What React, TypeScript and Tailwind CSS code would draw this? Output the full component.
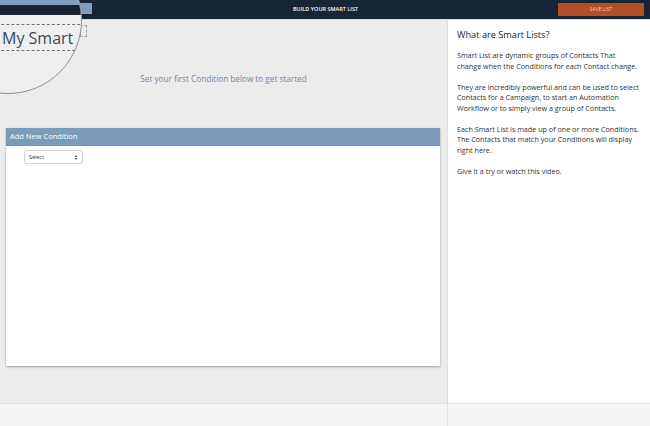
import React from "react";

const font = { fontFamily: '"Open Sans", "Liberation Sans", sans-serif' };

export default function App() {
  return (
    <div
      className="relative w-[650px] h-[426px] overflow-hidden flex flex-col bg-[#ececec]"
      style={font}
    >
      {/* Header */}
      <div className="relative h-[20px] shrink-0 bg-[#172537] border-b border-[#d6d9dd] flex items-center">
        <div className="absolute left-0 top-[3px] w-[92px] h-[11px] bg-[#7f9fbf]" />
        <div className="flex-1 flex justify-center">
          <span className="text-[5.5px] font-semibold text-white ml-[1px]">
            BUILD YOUR SMART LIST
          </span>
        </div>
        <div className="absolute left-[558px] top-[3px] w-[86px] h-[13px] bg-[#b24f27] flex items-center justify-center">
          <span className="text-[5px] text-[#e9c9b8]">SAVE LIST</span>
        </div>
      </div>

      {/* Main */}
      <div className="flex flex-1 min-h-0">
        <div className="w-[447px] shrink-0 bg-[#ececec] flex flex-col">
          <div className="h-[108px] flex items-start justify-center pt-[53px]">
            <span className="text-[8.2px] text-[#6e89a6] leading-[12px]">
              Set your first Condition below to get started
            </span>
          </div>
          <div className="ml-[6px] w-[434px] h-[238px] bg-white flex flex-col shadow-[0_1px_2px_rgba(0,0,0,0.35)]">
            <div className="h-[18px] bg-[#7a9bb9] flex items-center px-[4px] border-b border-dotted border-[#6a89a6]">
              <span className="text-[7.5px] text-white">Add New Condition</span>
            </div>
            <div className="pl-[18px] pt-[4px]">
              <div className="w-[59px] h-[14px] border border-[#cfd3d8] rounded-[3px] flex items-center justify-between px-[4px] bg-white">
                <span className="text-[5.5px] text-[#333]">Select</span>
                <svg width="4" height="7" viewBox="0 0 4 7">
                  <path d="M0.5 3 L2 1 L3.5 3 Z" fill="#555" />
                  <path d="M0.5 4 L2 6 L3.5 4 Z" fill="#555" />
                </svg>
              </div>
            </div>
          </div>
        </div>
        <div className="flex-1 bg-white border-l border-[#dedede] pl-[9px] pr-[4px] pt-[8px] text-[#2b2b2b]">
          <div className="text-[9.2px] leading-[13px] text-[#222] mb-[9px]">What are Smart Lists?</div>
          <div className="text-[7.2px] leading-[10.5px] flex flex-col gap-[10.5px] text-[#333] whitespace-nowrap">
            <p>Smart List are dynamic groups of Contacts That<br />change when the Conditions for each Contact change.</p>
            <p>They are incredibly powerful and can be used to select<br />Contacts for a Campaign, to start an Automation<br />Workflow or to simply view a group of Contacts.</p>
            <p>Each Smart List is made up of one or more Conditions.<br />The Contacts that match your Conditions will display<br />right here.</p>
            <p>Give it a try or watch this video.</p>
          </div>
        </div>
      </div>

      {/* Footer */}
      <div className="h-[23px] shrink-0 flex bg-[#f5f5f5] border-t border-[#e2e2e2]">
        <div className="w-[447px]" />
        <div className="flex-1 border-l border-[#e2e2e2]" />
      </div>

      {/* small dashed box outside magnifier */}
      <div className="absolute left-[80px] top-[25px] w-[7px] h-[12px] border border-dashed border-[#9aa1aa]" />

      {/* Magnifier */}
      <div className="absolute left-[-66px] top-[-54px] w-[148px] h-[148px] rounded-full border border-[#8c9198] overflow-hidden bg-[#efefef]">
        <div className="absolute left-[66px] top-[54px] w-[200px] h-[100px]">
          <div className="absolute left-[-80px] top-[-60px] w-[300px] h-[64px] bg-[#7f9fbf]" />
          <div className="absolute left-[-80px] top-[4px] w-[300px] h-[10px] bg-[#172537]" />
          <div className="absolute left-[-20px] top-[23px] w-[160px] h-[27px] border border-dashed border-[#6b7480] flex items-center">
            <span className="ml-[20px] text-[16px] leading-[20px] text-[#3c4858] whitespace-nowrap">My Smart</span>
          </div>
        </div>
      </div>
    </div>
  );
}
